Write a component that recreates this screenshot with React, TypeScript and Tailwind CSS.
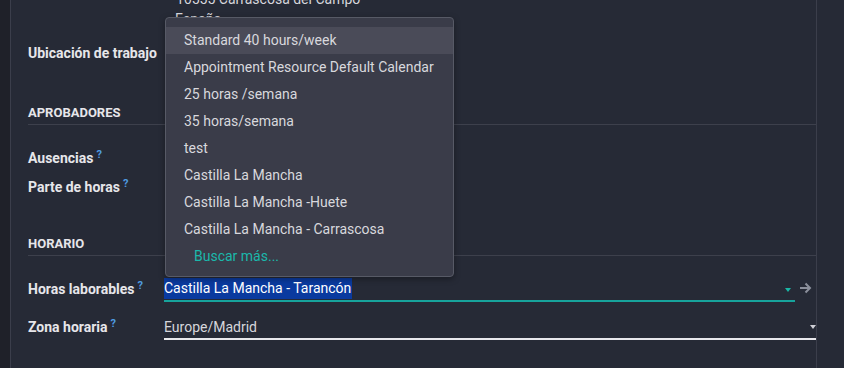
import React from "react";

const font = { fontFamily: "Roboto, 'Noto Sans', sans-serif" };

function Q() {
  return <sup className="ml-[3px] text-[11px] font-bold text-[#4f9be0] relative top-[-3px]">?</sup>;
}

function SectionHead({ title }: { title: string }) {
  return (
    <div className="border-b border-[#3d404c] pb-[2px]">
      <div className="text-[13px] font-bold leading-[18px] text-[#e6e6ea]">{title}</div>
    </div>
  );
}

const items = [
  "Standard 40 hours/week",
  "Appointment Resource Default Calendar",
  "25 horas /semana",
  "35 horas/semana",
  "test",
  "Castilla La Mancha",
  "Castilla La Mancha -Huete",
  "Castilla La Mancha - Carrascosa",
];

export default function App() {
  return (
    <div className="w-[844px] h-[368px] overflow-hidden bg-[#262a36] flex relative" style={font}>
      <div className="w-[11px] shrink-0 bg-[#1f2129] border-r border-[#3b3e4b]" />
      <div className="w-[806px] shrink-0 border-r border-[#3b3e4b] pl-[17px] flex flex-col">
        <div className="mt-[-11px] pl-[148px] text-[14px] leading-[20px] text-[#d6d6dc]">
          <div>16555 Carrascosa del Campo</div>
          <div className="-ml-[1px]">España</div>
        </div>
        <div className="mt-[14px] h-[20px] flex items-center text-[14px] font-bold text-[#e6e6ea]">
          Ubicación de trabajo
        </div>
        <div className="mt-[41px]">
          <SectionHead title="APROBADORES" />
        </div>
        <div className="mt-[23px] h-[20px] flex items-center text-[14px] font-bold text-[#e6e6ea]">
          Ausencias<Q />
        </div>
        <div className="mt-[9px] h-[20px] flex items-center text-[14px] font-bold text-[#e6e6ea]">
          Parte de horas<Q />
        </div>
        <div className="mt-[38px]">
          <SectionHead title="HORARIO" />
        </div>
        <div className="mt-[22px] flex items-start">
          <div className="w-[136px] shrink-0 h-[22px] flex items-center text-[14px] font-bold text-[#e6e6ea]">
            Horas laborables<Q />
          </div>
          <div className="flex items-center flex-1">
            <div className="w-[631px] border-b-[2px] border-[#17a39c] h-[24px] flex items-start relative">
              <span className="bg-[#0a3a9f] text-white text-[14px] leading-[21px] h-[21px] pr-[1px]">Castilla La Mancha - Tarancón</span>
              <span className="absolute right-[4px] top-[10px] w-0 h-0 border-l-[3.5px] border-r-[3.5px] border-t-[4px] border-l-transparent border-r-transparent border-t-[#1ab7a6]" />
            </div>
            <svg width="13" height="12" viewBox="0 0 13 12" className="ml-[4px] mb-[4px]">
              <path d="M1 6h10M6.5 1.5 11 6l-4.5 4.5" stroke="#8b8f9b" strokeWidth="2" fill="none" />
            </svg>
          </div>
        </div>
        <div className="mt-[14px] flex items-start">
          <div className="w-[136px] shrink-0 h-[22px] flex items-center text-[14px] font-bold text-[#e6e6ea]">
            Zona horaria<Q />
          </div>
          <div className="flex-1 border-b-[2px] border-[#e8e8ec] h-[24px] flex items-center relative">
            <span className="text-[#d6d6dc] text-[14px]">Europe/Madrid</span>
            <span className="absolute right-[0px] top-[9px] w-0 h-0 border-l-[3.5px] border-r-[3.5px] border-t-[4px] border-l-transparent border-r-transparent border-t-[#d0d0d6]" />
          </div>
        </div>
      </div>
      <div className="flex-1" />

      <div className="absolute left-[165px] top-[17px] w-[289px] h-[260px] bg-[#3a3c49] border border-[#575a66] rounded-[4px] pt-[9px] shadow-[0_2px_6px_rgba(0,0,0,0.35)]">
        {items.map((t, i) => (
          <div
            key={t}
            className={`h-[27px] flex items-center pl-[18px] text-[14px] text-[#d8d8dd] ${i === 0 ? "bg-[#4a4b58]" : ""}`}
          >
            {t}
          </div>
        ))}
        <div className="h-[27px] flex items-center pl-[28px] text-[14px] text-[#1ab8ab]">Buscar más...</div>
      </div>
    </div>
  );
}
